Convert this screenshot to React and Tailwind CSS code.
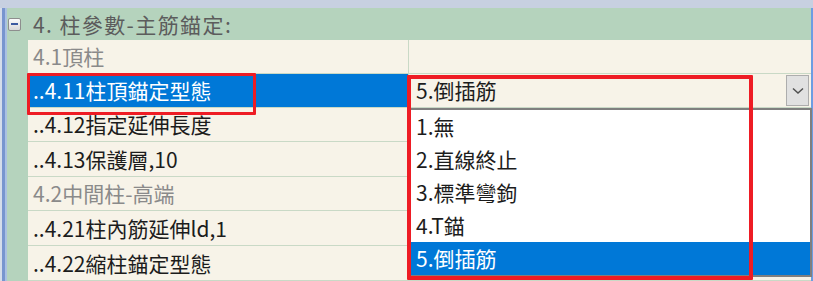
import React from 'react';

const rows = [
  { name: '4.1頂柱', value: '', group: true, h: 'h-[34px]' },
  { name: '..4.11柱頂錨定型態', value: '5.倒插筋', selected: true, h: 'h-[34px]' },
  { name: '..4.12指定延伸長度', value: '', h: 'h-[34px]' },
  { name: '..4.13保護層,10', value: '', h: 'h-[35px]' },
  { name: '4.2中間柱-高端', value: '', group: true, h: 'h-[34px]' },
  { name: '..4.21柱內筋延伸ld,1', value: '', h: 'h-[35px]' },
  { name: '..4.22縮柱錨定型態', value: '', h: 'h-[35px]' },
];

const options = ['1.無', '2.直線終止', '3.標準彎鉤', '4.T錨', '5.倒插筋'];

function Row({ row }) {
  return (
    <div className={`flex ${row.h} border-b border-[#c9d9c6]`}>
      <div
        className={`w-[381px] flex items-center pl-[5px] border-r border-[#c9d9c6] ${
          row.selected ? 'bg-[#0078d7] text-white' : 'bg-[#f7f3e8]'
        } ${row.group ? 'text-[#8a8a8a]' : row.selected ? '' : 'text-[#1c1c1c]'}`}
      >
        {row.name}
      </div>
      <div className="flex-1 flex items-center bg-[#f7f3e8] pl-[7px] text-[#1c1c1c]">
        <span className="flex-1">{row.value}</span>
        {row.selected && (
          <div className="w-[23px] h-[31px] mr-[2px] bg-[#e1e1e1] border border-[#adadad] flex items-center justify-center">
            <svg width="12" height="8" viewBox="0 0 12 8">
              <path d="M1 1.5 L6 6 L11 1.5" fill="none" stroke="#505050" strokeWidth="1.5" />
            </svg>
          </div>
        )}
      </div>
    </div>
  );
}

export default function App() {
  return (
    <div
      className="relative w-[813px] h-[281px] overflow-hidden bg-[#c7d0e1] text-[21px] leading-none"
      style={{ fontFamily: '"Noto Sans CJK TC", "Noto Sans", sans-serif' }}
    >
      <div className="h-[8px]" />
      <div className="flex h-[273px]">
        <div className="w-[2px] bg-[#d5dcea]" />
        <div className="w-[3px] bg-[#7895cf]" />
        <div className="w-[2px] bg-[#aac0e2]" />
        <div className="flex-1 flex flex-col bg-[#b5d3bd]">
          <div className="h-[32px] flex items-center">
            <div className="ml-[1px] w-[13px] h-[13px] rounded-[2px] border border-[#8e8e8e] bg-gradient-to-b from-[#fbfbfb] to-[#d8d8d8] flex items-center justify-center">
              <div className="w-[7px] h-[2px] bg-[#3c5aa0]" />
            </div>
            <span className="ml-[12px] text-[21px] tracking-[1.4px] text-[#5c5c5c]">4. 柱參數-主筋錨定:</span>
          </div>
          <div className="ml-[21px] flex flex-col">
            {rows.map((row, i) => (
              <Row key={i} row={row} />
            ))}
          </div>
        </div>
        <div className="w-[2px] bg-[#6d9de2]" />
      </div>

      {/* dropdown list */}
      <div className="absolute left-[408px] top-[108px] w-[404px] h-[169px] bg-white border-2 border-[#7f7f7f] flex flex-col">
        {options.map((opt, i) => (
          <div
            key={i}
            className={`h-[33px] flex items-center pl-[6px] ${
              i === 4 ? 'bg-[#0078d7] text-white' : 'text-[#1c1c1c]'
            }`}
          >
            {opt}
          </div>
        ))}
      </div>

      {/* annotation boxes */}
      <div className="absolute left-[27px] top-[73px] w-[229px] h-[42px] border-[3px] border-[#ee1c24] rounded-[1px]" />
      <div className="absolute left-[407px] top-[75px] w-[346px] h-[205px] border-[4px] border-[#ee1c24] rounded-[1px]" />
    </div>
  );
}
